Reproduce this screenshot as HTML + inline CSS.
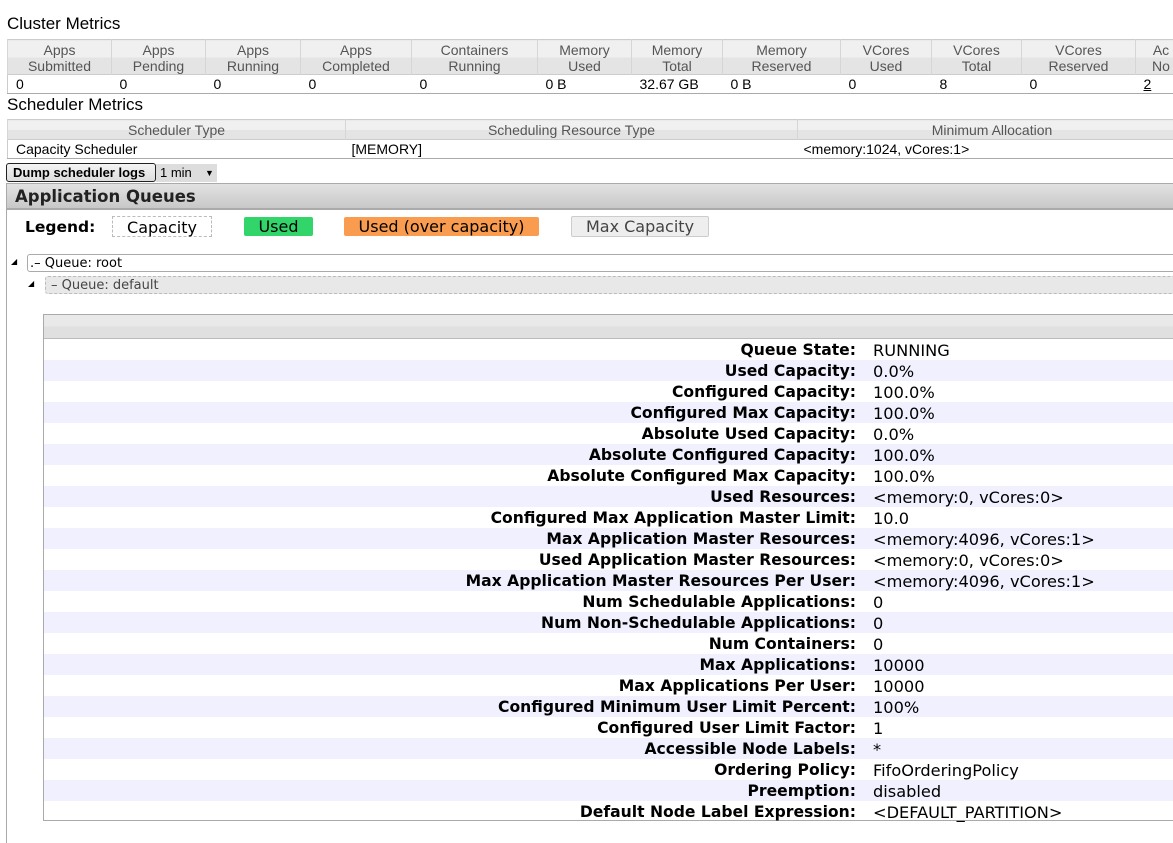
<!DOCTYPE html>
<html><head><meta charset="utf-8"><style>
*{margin:0;padding:0;box-sizing:border-box}
body{width:1173px;height:824px;overflow:hidden;background:#fff;font-family:"Liberation Sans",Arial,sans-serif;position:relative;color:#000}
.abs{position:absolute}
h3{position:absolute;font-weight:normal;font-size:17px;left:7px}
table{border-collapse:collapse;position:absolute;font-size:14px}
th{font-weight:normal;color:#555;background:linear-gradient(#f0f0f0 50%,#e4e4e4 50%);border-left:1px solid #d6d6d6;border-right:1px solid #d6d6d6;line-height:16px;text-align:center;padding-top:2px}
td{padding-left:8px;line-height:18px;white-space:nowrap}
.dv{font-family:"DejaVu Sans",Verdana,sans-serif}
.row{position:absolute;left:44px;width:1129px;height:21px;font-size:15.6px;line-height:23px}
.row b{position:absolute;right:317px;top:0;white-space:nowrap}
.row span{position:absolute;left:829px;top:0;white-space:nowrap;font-size:16.2px}
.alt{background:#f0f0fe}
</style></head><body>
<h3 style="top:14px">Cluster Metrics</h3>
<table style="left:7px;top:39px;width:1180px;border-bottom:1px solid #aaa;border-left:1px solid #ccc">
<tr style="height:35px;border-top:1px solid #ccc;border-bottom:1px solid #ccc">
<th style="width:104px">Apps<br>Submitted</th><th style="width:94px">Apps<br>Pending</th><th style="width:95px">Apps<br>Running</th><th style="width:111px">Apps<br>Completed</th><th style="width:126px">Containers<br>Running</th><th style="width:94px">Memory<br>Used</th><th style="width:91px">Memory<br>Total</th><th style="width:118px">Memory<br>Reserved</th><th style="width:91px">VCores<br>Used</th><th style="width:90px">VCores<br>Total</th><th style="width:114px">VCores<br>Reserved</th><th>Ac<br>No</th></tr>
<tr style="height:19px"><td style="padding-left:8px">0</td><td>0</td><td>0</td><td>0</td><td>0</td><td>0 B</td><td>32.67 GB</td><td>0 B</td><td>0</td><td>8</td><td>0</td><td><u>2</u></td></tr>
</table>
<h3 style="top:95px">Scheduler Metrics</h3>
<table style="left:7px;top:119px;width:1180px;border-bottom:1px solid #aaa;border-left:1px solid #ccc">
<tr style="height:20px;border-top:1px solid #ccc;border-bottom:1px solid #ccc"><th style="width:338px;padding-top:0">Scheduler Type</th><th style="width:452px;padding-top:0">Scheduling Resource Type</th><th style="padding-top:0">Minimum Allocation</th></tr>
<tr style="height:19px"><td>Capacity Scheduler</td><td style="padding-left:6px">[MEMORY]</td><td style="padding-left:6px">&lt;memory:1024, vCores:1&gt;</td></tr>
</table>
<div class="abs" style="left:6px;top:163px;width:150px;height:19px;border:1px solid #222;border-radius:3px;background:linear-gradient(#f4f4f4,#ddd);font-size:13px;font-weight:bold;line-height:17px;padding-left:6px">Dump scheduler logs</div>
<div class="abs" style="left:156px;top:164px;width:61px;height:18px;background:#ddd;font-size:13px;line-height:18px;padding-left:4px">1 min <span style="font-size:9px;position:absolute;left:49px">▼</span></div>
<div class="abs" style="left:6px;top:183px;width:1170px;height:660px;border-left:1px solid #aaa;border-top:1px solid #aaa"></div>
<div class="abs dv" style="left:7px;top:184px;width:1166px;height:26px;background:linear-gradient(#e2e2e2,#c8c8c8);border-bottom:2px solid #aaa;font-weight:bold;font-size:16.5px;line-height:25px;padding-left:8px;color:#222">Application Queues</div>
<div class="abs dv" style="left:25px;top:217px;font-size:15.5px;font-weight:bold;line-height:21px">Legend:</div>
<div class="abs dv" style="left:112px;top:216px;width:100px;height:21px;border:1px dashed #bbb;font-size:16px;text-align:center;line-height:21px">Capacity</div>
<div class="abs dv" style="left:244px;top:217px;width:69px;height:19px;background:#32d56a;border-radius:2px;font-size:16px;text-align:center;line-height:20px">Used</div>
<div class="abs dv" style="left:344px;top:217px;width:195px;height:19px;background:#fa9c4f;border-radius:2px;font-size:16px;text-align:center;line-height:20px">Used (over capacity)</div>
<div class="abs dv" style="left:571px;top:216px;width:138px;height:21px;background:#eee;border:1px solid #ccc;border-radius:2px;font-size:16px;text-align:center;line-height:20px;color:#444">Max Capacity</div>
<div class="abs" style="left:11px;top:257px;font-size:8px">◢</div>
<div class="abs dv" style="left:27px;top:254px;width:1150px;height:18px;border:1px solid #aaa;border-radius:3px;font-size:13px;line-height:17px;padding-left:2px;background:#fff">.– Queue: root</div>
<div class="abs" style="left:28px;top:279px;font-size:8px">◢</div>
<div class="abs dv" style="left:45px;top:276px;width:1132px;height:18px;border:1px dashed #bbb;border-radius:3px;background:#e8e8e8;font-size:13px;line-height:17px;padding-left:5px;color:#444">– Queue: default</div>
<div class="abs" style="left:43px;top:314px;width:1135px;height:507px;border:1px solid #aaa"></div>
<div class="abs" style="left:44px;top:315px;width:1129px;height:24px;background:linear-gradient(#e9e9e9 50%,#e0e0e0 50%);border-bottom:1px solid #bbb"></div>
<div class="dv">
<div class="row" style="top:339px"><b>Queue State:</b><span>RUNNING</span></div>
<div class="row alt" style="top:360px"><b>Used Capacity:</b><span>0.0%</span></div>
<div class="row" style="top:381px"><b>Configured Capacity:</b><span>100.0%</span></div>
<div class="row alt" style="top:402px"><b>Configured Max Capacity:</b><span>100.0%</span></div>
<div class="row" style="top:423px"><b>Absolute Used Capacity:</b><span>0.0%</span></div>
<div class="row alt" style="top:444px"><b>Absolute Configured Capacity:</b><span>100.0%</span></div>
<div class="row" style="top:465px"><b>Absolute Configured Max Capacity:</b><span>100.0%</span></div>
<div class="row alt" style="top:486px"><b>Used Resources:</b><span>&lt;memory:0, vCores:0&gt;</span></div>
<div class="row" style="top:507px"><b>Configured Max Application Master Limit:</b><span>10.0</span></div>
<div class="row alt" style="top:528px"><b>Max Application Master Resources:</b><span>&lt;memory:4096, vCores:1&gt;</span></div>
<div class="row" style="top:549px"><b>Used Application Master Resources:</b><span>&lt;memory:0, vCores:0&gt;</span></div>
<div class="row alt" style="top:570px"><b>Max Application Master Resources Per User:</b><span>&lt;memory:4096, vCores:1&gt;</span></div>
<div class="row" style="top:591px"><b>Num Schedulable Applications:</b><span>0</span></div>
<div class="row alt" style="top:612px"><b>Num Non-Schedulable Applications:</b><span>0</span></div>
<div class="row" style="top:633px"><b>Num Containers:</b><span>0</span></div>
<div class="row alt" style="top:654px"><b>Max Applications:</b><span>10000</span></div>
<div class="row" style="top:675px"><b>Max Applications Per User:</b><span>10000</span></div>
<div class="row alt" style="top:696px"><b>Configured Minimum User Limit Percent:</b><span>100%</span></div>
<div class="row" style="top:717px"><b>Configured User Limit Factor:</b><span>1</span></div>
<div class="row alt" style="top:738px"><b>Accessible Node Labels:</b><span>*</span></div>
<div class="row" style="top:759px"><b>Ordering Policy:</b><span>FifoOrderingPolicy</span></div>
<div class="row alt" style="top:780px"><b>Preemption:</b><span>disabled</span></div>
<div class="row" style="top:801px;height:20px"><b>Default Node Label Expression:</b><span>&lt;DEFAULT_PARTITION&gt;</span></div>
</div>
</body></html>
